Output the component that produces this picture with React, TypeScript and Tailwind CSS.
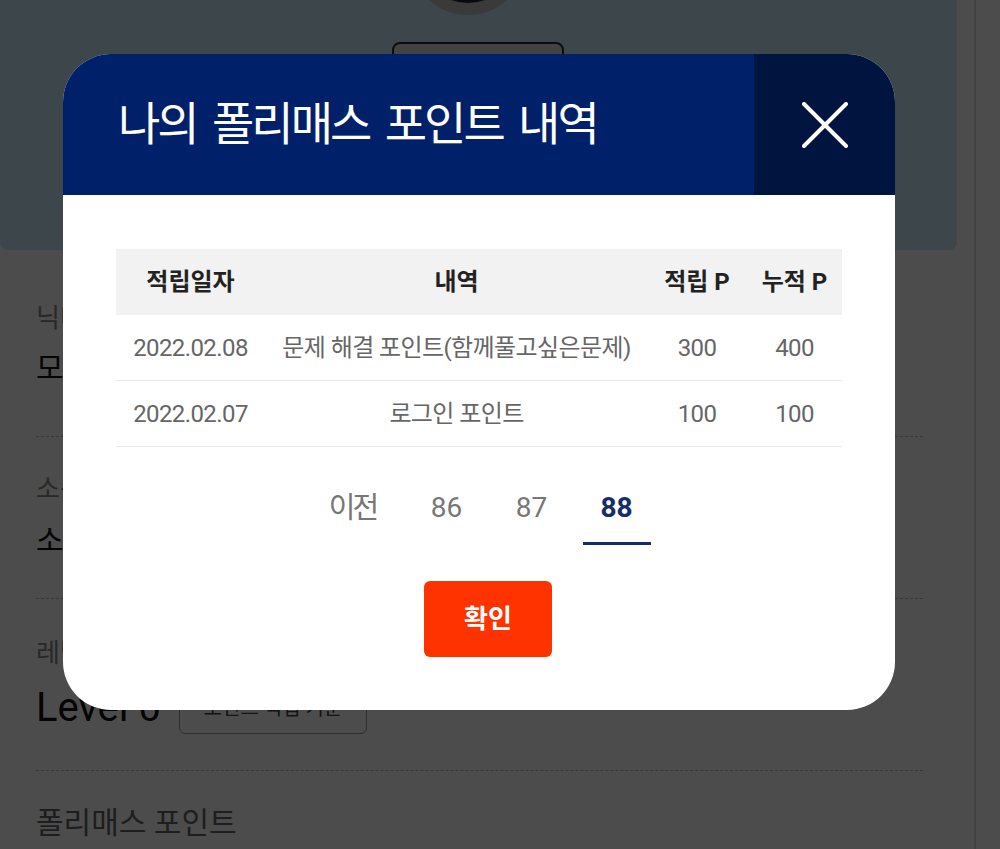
const rows = [
  { date: '2022.02.08', desc: '문제 해결 포인트(함께풀고싶은문제)', earned: 300, total: 400 },
  { date: '2022.02.07', desc: '로그인 포인트', earned: 100, total: 100 },
]

const pages = ['86', '87', '88']

export default function App() {
  return (
    <div className="relative h-[849px] w-[1000px] overflow-hidden bg-white font-['Roboto','Noto_Sans_CJK_KR',sans-serif]">
      {/* 뒤 페이지 */}
      <div className="flex h-full">
        <div className="w-[974px]">
          {/* 프로필 영역 */}
          <div className="flex h-[250px] w-[957px] flex-col items-center rounded-b-lg bg-[#cbedfa]">
            <div className="-mt-[103px] ml-[-22px] h-[118px] w-[118px] rounded-full border-[12px] border-[#c4c4c4] bg-[#1a2030]" />
            <div className="mt-[27px] ml-[-1px] h-[52px] w-[172px] rounded-lg border-2 border-[#2a2a2a] bg-[#dcdcdc]" />
          </div>

          {/* 정보 목록 */}
          <div className="px-[36px] pr-[51px]">
            <div className="border-b border-dashed border-[#bdbdbd] pt-[50px] pb-[48px]">
              <div className="text-[26px] leading-[36px] text-[#888]">닉네임</div>
              <div className="mt-[12px] text-[30px] leading-[40px] text-[#111]">모두</div>
            </div>
            <div className="border-b border-dashed border-[#bdbdbd] pt-[34px] pb-[37px]">
              <div className="text-[26px] leading-[36px] text-[#888]">소속</div>
              <div className="mt-[14px] text-[30px] leading-[40px] text-[#111]">소속</div>
            </div>
            <div className="border-b border-dashed border-[#bdbdbd] pt-[36px] pb-[36px]">
              <div className="text-[26px] leading-[36px] text-[#888]">레벨</div>
              <div className="mt-[10px] flex h-[53px] items-center gap-[18px]">
                <span className="text-[40px] text-[#111]">Level 0</span>
                <span className="flex h-[53px] w-[188px] items-center justify-center rounded-md border border-[#999] text-[20px] text-[#444]">
                  포인트 적립 기준
                </span>
              </div>
            </div>
            <div className="pt-[34px]">
              <div className="text-[30px] leading-[36px] text-[#666]">폴리매스 포인트</div>
            </div>
          </div>
        </div>
        <div className="flex-1 border-l-2 border-[#e2e2e2]" />
      </div>

      {/* 딤 */}
      <div className="absolute inset-0 bg-black/70" />

      {/* 모달 */}
      <div className="absolute top-[54px] left-[63px] w-[832px] overflow-hidden rounded-[48px] bg-white">
        <div className="flex h-[141px]">
          <div className="flex flex-1 items-center bg-[#002069] pl-[55px]">
            <h1 className="text-[46px] font-normal tracking-[-3px] text-white [word-spacing:7px]">
              나의 폴리매스 포인트 내역
            </h1>
          </div>
          <button className="flex w-[141px] items-center justify-center bg-[#001440]">
            <svg width="46" height="46" viewBox="0 0 46 46" fill="none">
              <path d="M2 2L44 44M44 2L2 44" stroke="white" strokeWidth="4" strokeLinecap="round" />
            </svg>
          </button>
        </div>

        <div className="px-[53px] pt-[54px] pb-[53px]">
          {/* 내역 테이블 */}
          <div className="grid h-[66px] grid-cols-[149px_383px_98px_97px] items-center bg-[#f2f2f2] text-center text-[24px] font-bold text-[#222]">
            <span>적립일자</span>
            <span>내역</span>
            <span>적립 P</span>
            <span>누적 P</span>
          </div>
          {rows.map((row) => (
            <div
              key={row.date}
              className="grid h-[66px] grid-cols-[149px_383px_98px_97px] items-center border-b border-[#e8e8e8] text-center text-[24px] tracking-[-0.6px] text-[#666]"
            >
              <span>{row.date}</span>
              <span>{row.desc}</span>
              <span>{row.earned}</span>
              <span>{row.total}</span>
            </div>
          ))}

          {/* 페이지네이션 */}
          <div className="mt-[41px] flex justify-center gap-[17px] pl-[11px]">
            <span className="mr-[9px] flex w-[68px] justify-center pb-[17px] text-[29px] leading-[40px] tracking-[-3px] text-[#777]">
              이전
            </span>
            {pages.map((p) => (
              <span
                key={p}
                className={
                  p === '88'
                    ? 'flex w-[68px] justify-center border-b-[3px] border-[#142d6b] pb-[14px] text-[28px] leading-[40px] font-bold text-[#142d6b]'
                    : 'flex w-[68px] justify-center pb-[17px] text-[28px] leading-[40px] text-[#777]'
                }
              >
                {p}
              </span>
            ))}
          </div>

          {/* 확인 버튼 */}
          <div className="mt-[36px] flex justify-center pl-[18px]">
            <button className="h-[76px] w-[128px] rounded-md bg-[#ff3300] text-[26px] font-bold text-white">
              확인
            </button>
          </div>
        </div>
      </div>
    </div>
  )
}
